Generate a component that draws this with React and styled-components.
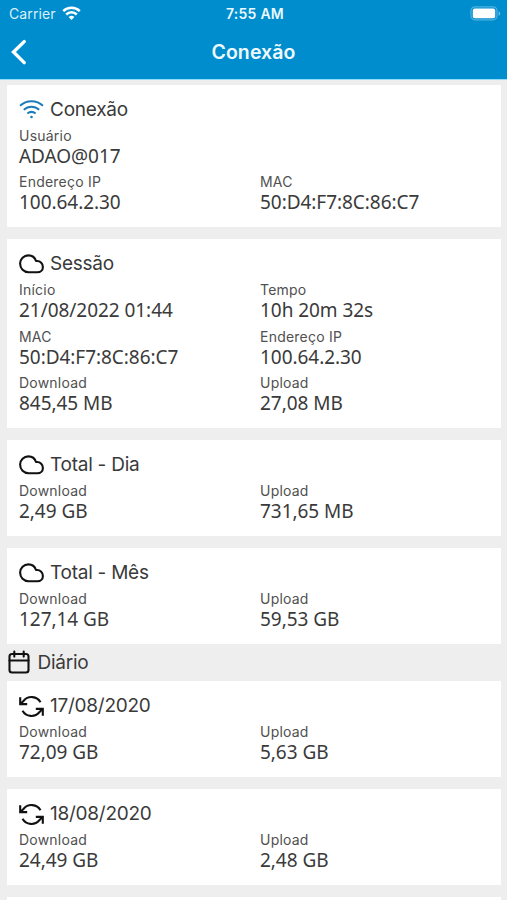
import React from "react";
import styled, { createGlobalStyle } from "styled-components";

const GlobalStyle = createGlobalStyle`
  * { box-sizing: border-box; }
  html, body { margin: 0; padding: 0; background: #eeeeee; }
  body { height: 900px; overflow: hidden; }
`;

const Screen = styled.div`
  width: 507px;
  height: 900px;
  overflow: hidden;
  background: #eeeeee;
  color: #3a3a3a;
  font-family: Inter, "Liberation Sans", sans-serif;
`;

const Header = styled.header`
  height: 80px;
  background: #008dcd;
  border-bottom: 1px solid #8fdcfa;
  color: #ffffff;
`;

const StatusBar = styled.div`
  height: 27px;
  padding: 0 6px 0 9px;
  display: grid;
  grid-template-columns: 1fr auto 1fr;
  align-items: center;
`;

const Carrier = styled.div`
  display: flex;
  align-items: center;
  gap: 6px;
  font-size: 14px;
  letter-spacing: 0.1px;
  color: #d9f1fc;
`;

const Clock = styled.div`
  font-size: 14px;
  font-weight: 600;
  letter-spacing: 0.25px;
  color: #eaf8ff;
`;

const BatterySlot = styled.div`
  display: flex;
  justify-content: flex-end;
`;

const NavBar = styled.nav`
  height: 50px;
  padding: 0 10px;
  display: grid;
  grid-template-columns: 20px 1fr 20px;
  align-items: center;
`;

const NavTitle = styled.h1`
  margin: 0;
  text-align: center;
  font-size: 19.5px;
  line-height: 26px;
  font-weight: 600;
  letter-spacing: 0.1px;
  color: #effaff;
`;

const Content = styled.main`
  padding: 4.6px 6px 0 7px;
`;

const Card = styled.section`
  background: #ffffff;
  padding: 8.6px 0 8.3px 12px;
  & + & { margin-top: 12px; }
`;

const CardTitle = styled.h2`
  margin: 0;
  height: 32.4px;
  display: flex;
  align-items: center;
  gap: 6px;
  font-size: 19px;
  font-weight: 400;
  letter-spacing: -0.25px;
  white-space: nowrap;
`;

const SectionTitle = styled(CardTitle)`
  height: 37px;
  gap: 7px;
  svg { margin-left: -0.5px; }
`;

const FieldGrid = styled.div`
  display: grid;
  grid-template-columns: 241px 1fr;
  grid-auto-rows: 46.6px;
`;

const Label = styled.div`
  height: 20px;
  line-height: 20.6px;
  font-size: 14px;
  letter-spacing: 0.22px;
  color: #505050;
`;

const Value = styled.div`
  height: 20px;
  line-height: 20px;
  font-family: "Noto Sans", sans-serif;
  font-size: 19px;
  letter-spacing: -0.05px;
  white-space: nowrap;
  color: #3a3a3a;
`;

const StatusWifi = () => (
  <svg width="19" height="15" viewBox="0 0 19 15" fill="none" stroke="#fff" strokeWidth="2.5">
    <path d="M1.2 5.2a11.8 11.8 0 0 1 16.6 0" />
    <path d="M4.2 8.5a7.500 7.500 0 0 1 10.600 0" />
    <path d="M6.600 11.100a4.100 4.100 0 0 1 5.800 0L9.500 14z" fill="#fff" stroke="none" />
  </svg>
);

const Battery = () => (
  <svg width="31" height="15" viewBox="0 0 31 15" fill="none">
    <rect x="1" y="0.8" width="26" height="13" rx="4" stroke="#50b2df" strokeWidth="1.2" />
    <rect x="2.800" y="2.600" width="22.400" height="9.600" rx="2" fill="#fff" />
    <path d="M28.600 5.200c2.200.8 2.200 3.800 0 4.600z" fill="#66bfe7" />
  </svg>
);

const BackIcon = () => (
  <svg width="17" height="26" viewBox="0 0 17 26" fill="none" stroke="#fff" strokeWidth="3.400" strokeLinecap="round" strokeLinejoin="miter">
    <path d="M14.200 2.600 3.500 13l10.700 10.600" />
  </svg>
);

const WifiIcon = () => (
  <svg width="25" height="22" viewBox="0 0 25 22" fill="none" stroke="#1e7ab8" strokeWidth="2">
    <path d="M1.100 7.800c6.300-6.100 16.500-6.100 22.800 0" />
    <path d="M4.800 11.800c4.500-4.200 10.900-4.200 15.400 0" />
    <path d="M8.400 15.600c2.600-2.200 5.600-2.200 8.200 0" />
    <circle cx="12.500" cy="19" r="1.300" fill="#1e7ab8" stroke="none" />
  </svg>
);

const CloudIcon = () => (
  <svg width="25" height="22" viewBox="0 0 25 22" fill="none" stroke="#111" strokeWidth="2.100" strokeLinejoin="round">
    <path d="M17 8C15.900 4.600 12.900 2.400 9.400 2.400 4.900 2.400 1.100 5.900 1.100 10.600c0 5 3.700 8.700 8.500 8.700h8.700c3.300 0 5.600-2.300 5.600-5.400 0-3.400-2.600-5.900-5.700-5.900z" />
  </svg>
);

const CalendarIcon = () => (
  <svg width="24" height="24" viewBox="0 0 24 24" fill="none" stroke="#111" strokeWidth="2.100" strokeLinecap="round" strokeLinejoin="round">
    <rect x="2.500" y="4" width="19" height="18.500" rx="2.500" />
    <path d="M2.500 10.500h19M7.300 1.600v5M16.700 1.600v5" />
  </svg>
);

const SyncIcon = () => (
  <svg width="25" height="24" viewBox="0 0 25 24" fill="none" stroke="#111" strokeWidth="2.100">
    <path d="M1.200 3.200v6.900h7" />
    <path d="M1.600 9.700 4.700 6.700A10.300 10.300 0 0 1 21.500 8.200" />
    <path d="M23.800 21.800v-6.900h-7" />
    <path d="M23.400 15.300 20.300 18.300A10.300 10.300 0 0 1 3.500 16.800" />
  </svg>
);

const cards = [
  {
    title: "Conexão",
    Icon: WifiIcon,
    fields: [["Usuário", "ADAO@017"], null, ["Endereço IP", "100.64.2.30"], ["MAC", "50:D4:F7:8C:86:C7"]],
  },
  {
    title: "Sessão",
    Icon: CloudIcon,
    fields: [
      ["Início", "21/08/2022 01:44"],
      ["Tempo", "10h 20m 32s"],
      ["MAC", "50:D4:F7:8C:86:C7"],
      ["Endereço IP", "100.64.2.30"],
      ["Download", "845,45 MB"],
      ["Upload", "27,08 MB"],
    ],
  },
  { title: "Total - Dia", Icon: CloudIcon, fields: [["Download", "2,49 GB"], ["Upload", "731,65 MB"]] },
  { title: "Total - Mês", Icon: CloudIcon, fields: [["Download", "127,14 GB"], ["Upload", "59,53 GB"]] },
];

const days = [
  { title: "17/08/2020", Icon: SyncIcon, fields: [["Download", "72,09 GB"], ["Upload", "5,63 GB"]] },
  { title: "18/08/2020", Icon: SyncIcon, fields: [["Download", "24,49 GB"], ["Upload", "2,48 GB"]] },
  { title: "", Icon: null, fields: [] },
];

const InfoCard = ({ title, Icon, fields }) => (
  <Card>
    <CardTitle>
      {Icon && <Icon />}
      <span>{title}</span>
    </CardTitle>
    <FieldGrid>
      {fields.map((f, i) => (
        <div key={i}>
          {f && (
            <>
              <Label><span>{f[0]}</span></Label>
              <Value><span>{f[1]}</span></Value>
            </>
          )}
        </div>
      ))}
    </FieldGrid>
  </Card>
);

export default function App() {
  return (
    <Screen>
      <GlobalStyle />
      <Header>
        <StatusBar>
          <Carrier>
            <span>Carrier</span>
            <StatusWifi />
          </Carrier>
          <Clock>7:55 AM</Clock>
          <BatterySlot>
            <Battery />
          </BatterySlot>
        </StatusBar>
        <NavBar>
          <BackIcon />
          <NavTitle>Conexão</NavTitle>
        </NavBar>
      </Header>
      <Content>
        {cards.map((c) => (
          <InfoCard key={c.title} {...c} />
        ))}
        <SectionTitle>
          <CalendarIcon />
          <span>Diário</span>
        </SectionTitle>
        {days.map((c) => (
          <InfoCard key={c.title} {...c} />
        ))}
      </Content>
    </Screen>
  );
}
